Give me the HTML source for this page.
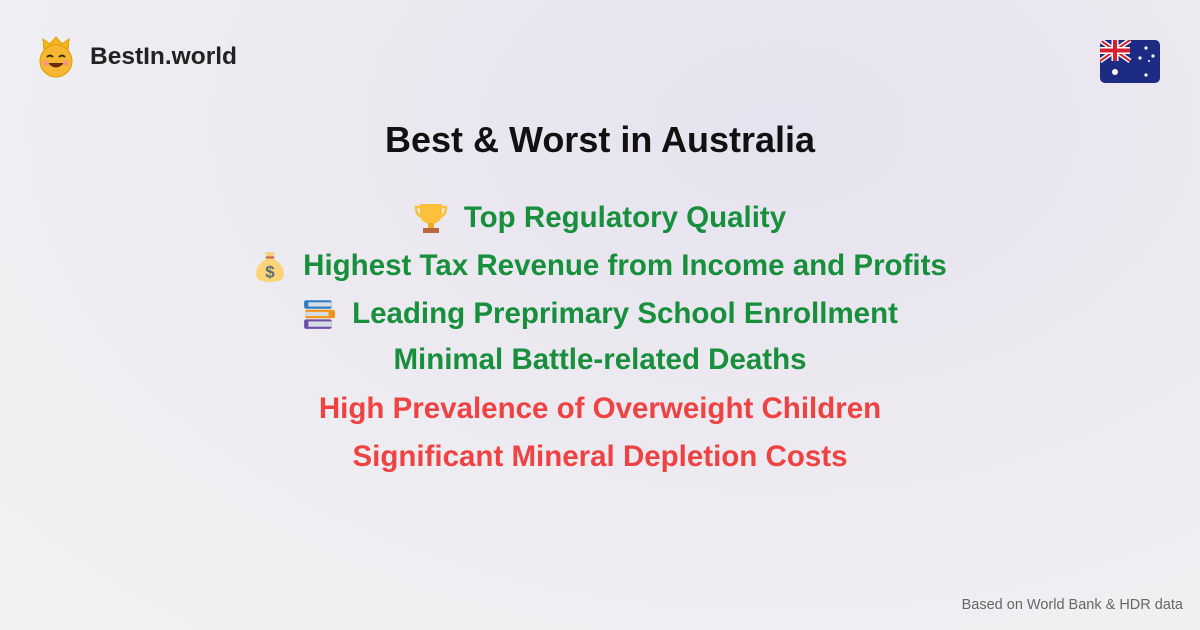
<!DOCTYPE html>
<html><head><meta charset="utf-8"><style>
html,body{margin:0;padding:0}
body{width:1200px;height:630px;overflow:hidden;position:relative;font-family:"Liberation Sans",sans-serif;background:radial-gradient(ellipse at 65% 20%,#e6e2ef 0%,#ebe8f0 35%,#eff0f2 75%,#f0f1f2 100%)}
.logo{position:absolute;left:38px;top:36px;display:flex;align-items:center}
.logo span{font-weight:bold;font-size:24.5px;color:#222;margin-left:16px}
.flag{position:absolute;left:1100px;top:40px;width:60px;height:43px;border-radius:5px;overflow:hidden}
h1{position:absolute;top:118px;left:0;width:1200px;text-align:center;margin:0;font-size:36px;color:#111;line-height:44px}
.line{position:absolute;left:0;width:1200px;text-align:center;font-size:29.5px;font-weight:bold;line-height:40px;display:flex;justify-content:center;align-items:center}
.g{color:#178f3c}.r{color:#ef4242}
.line svg{margin-right:16px}
.foot{position:absolute;right:17px;top:597px;font-size:14.5px;color:#666}
</style></head><body>
<div class="logo">
<svg width="36" height="42" viewBox="0 0 36 42"><path d="M6 14 L5 3 L12 8 L18 1 L24 8 L31 3 L30 14 Z" fill="#f5b81a" stroke="#e09a00" stroke-width="1"/><circle cx="18" cy="25" r="16" fill="#f7b733" stroke="#e09a00"/><path d="M9 21 q3-3 6 0 M21 21 q3-3 6 0" stroke="#3a2a10" stroke-width="2" fill="none"/><path d="M10 27 q8 9 16 0 z" fill="#6b2a10"/><circle cx="8" cy="27" r="3" fill="#f49a7a"/><circle cx="28" cy="27" r="3" fill="#f49a7a"/></svg>
<span>BestIn.world</span></div>
<div class="flag"><svg width="60" height="43" viewBox="0 0 60 43"><rect width="60" height="43" fill="#1d2b82"/><path d="M0 0 L30 21 M30 0 L0 21" stroke="#fff" stroke-width="5"/><path d="M0 0 L30 21 M30 0 L0 21" stroke="#d42030" stroke-width="2"/><path d="M15 0 V21 M0 10.5 H30" stroke="#fff" stroke-width="7"/><path d="M15 0 V21 M0 10.5 H30" stroke="#d42030" stroke-width="4"/><g fill="#fff"><circle cx="15" cy="32" r="3"/><circle cx="46" cy="8" r="1.6"/><circle cx="40" cy="18" r="1.6"/><circle cx="53" cy="16" r="1.6"/><circle cx="49" cy="21" r="1"/><circle cx="46" cy="35" r="1.6"/></g></svg></div>
<h1>Best &amp; Worst in Australia</h1>
<div class="line g" style="top:198px"><svg width="34" height="34" viewBox="0 0 34 34"><path d="M6 3 H28 V13 Q28 22 17 23 Q6 22 6 13 Z" fill="#fcc13a"/><path d="M6 6 H2 Q2 15 9 16 M28 6 H32 Q32 15 25 16" stroke="#fcc13a" stroke-width="2.5" fill="none"/><rect x="14" y="22" width="6" height="5" fill="#f0a820"/><rect x="9" y="27" width="16" height="5" fill="#b8673e"/></svg>Top Regulatory Quality</div>
<div class="line g" style="top:246px"><svg width="34" height="34" viewBox="0 0 32 32"><path d="M11 3 H21 L18 8 H14 Z" fill="#f9cf77"/><rect x="12" y="7" width="8" height="2" fill="#c0634a"/><path d="M13 9 Q2 15 3 25 Q4 31 16 31 Q28 31 29 25 Q30 15 19 9 Z" fill="#fcd477"/><text x="16" y="27" font-size="16" text-anchor="middle" fill="#5a6e7a" font-family="Liberation Sans">$</text></svg>Highest Tax Revenue from Income and Profits</div>
<div class="line g" style="top:294px"><svg width="34" height="34" viewBox="0 0 32 32"><rect x="2" y="3" width="26" height="8" rx="2" fill="#2d7cc8"/><rect x="6" y="5" width="22" height="4" fill="#d5dde2"/><rect x="3" y="12" width="28" height="8" rx="2" fill="#f49315"/><rect x="3" y="14" width="22" height="4" fill="#d5dde2"/><rect x="2" y="21" width="26" height="9" rx="2" fill="#6b4ba8"/><rect x="6" y="23" width="22" height="5" fill="#d5dde2"/></svg>Leading Preprimary School Enrollment</div>
<div class="line g" style="top:340px">Minimal Battle-related Deaths</div>
<div class="line r" style="top:389px">High Prevalence of Overweight Children</div>
<div class="line r" style="top:437px">Significant Mineral Depletion Costs</div>
<div class="foot">Based on World Bank &amp; HDR data</div>
</body></html>
